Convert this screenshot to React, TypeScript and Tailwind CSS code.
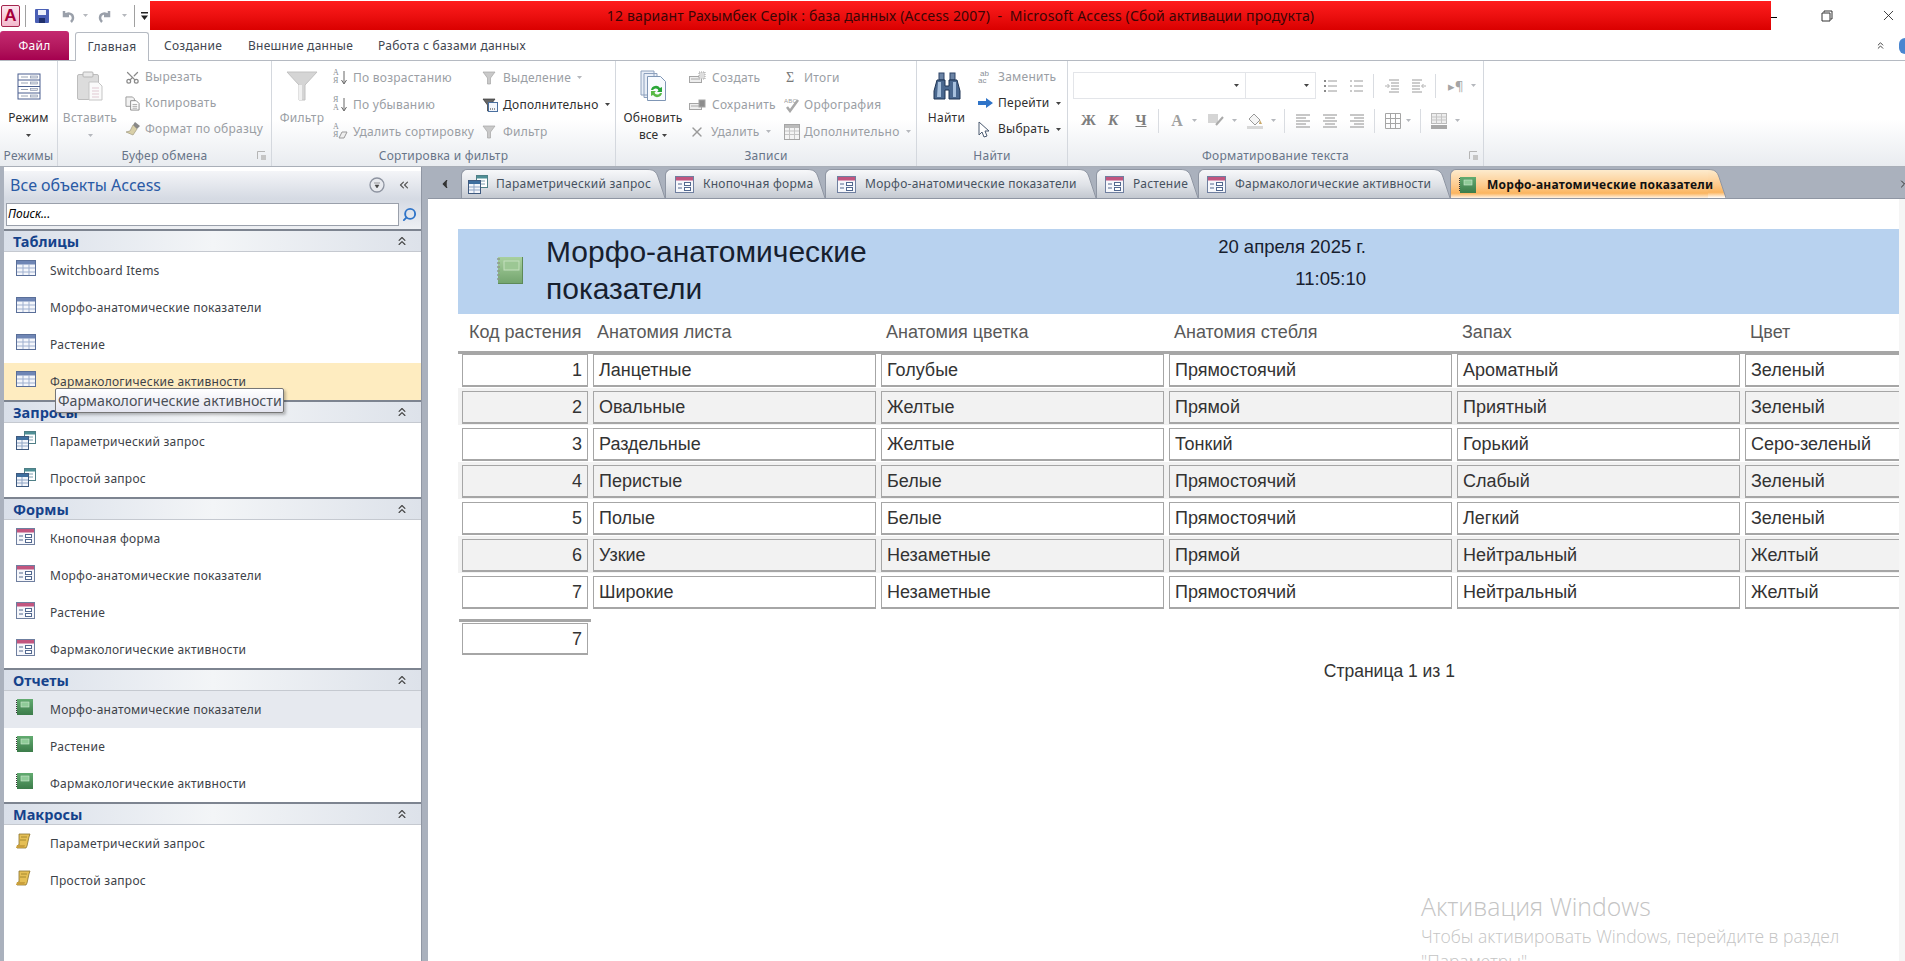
import React from 'react';
import { ChevronsUp, ChevronsLeft, ChevronLeft, ChevronRight, Search, X, Scissors } from 'lucide-react';

type IconProps = { className?: string };

const Caret: React.FC<IconProps & { dark?: boolean }> = ({ className = '', dark }) => (
  <svg viewBox="0 0 5 3" className={`w-[5px] h-[3px] shrink-0 ${className}`}>
    <path d="M0 0h5L2.500 3z" fill={dark ? '#444' : '#b5b8bd'} />
  </svg>
);

const Sep = ({ className = '' }: IconProps) => <div className={`w-px h-[24px] bg-[#d9dce1] shrink-0 ${className}`} />;

const TableIcon = () => (
  <svg viewBox="0 0 20 16" className="w-[20px] h-[16px]">
    <rect x="0.500" y="0.500" width="19" height="15" fill="#f4f6fb" stroke="#5a6f99" />
    <rect x="1" y="1" width="18" height="3.500" fill="#6f86b5" />
    <path d="M1 8h18M1 12h18M7 4v11M13 4v11" stroke="#9fb0cf" />
  </svg>
);

const QueryIcon = () => (
  <svg viewBox="0 0 20 19" className="w-[20px] h-[19px]">
    <rect x="8.500" y="0.500" width="11" height="12" fill="#fff" stroke="#4f7f86" />
    <rect x="9" y="1" width="10" height="2.500" fill="#4f8f96" />
    <path d="M11 6h6M11 9h6" stroke="#7f9fb0" />
    <rect x="0.500" y="5.500" width="12" height="13" fill="#f4f6fb" stroke="#3f5a7f" />
    <rect x="1" y="6" width="11" height="3" fill="#3f6f9f" />
    <path d="M1 12h11M1 15h11M6 9v9" stroke="#8fa5c5" />
  </svg>
);

const FormIcon = () => (
  <svg viewBox="0 0 19 17" className="w-[19px] h-[17px]">
    <rect x="0.500" y="0.500" width="18" height="16" fill="#f6f7fb" stroke="#6f7f9f" />
    <rect x="1" y="1" width="17" height="3.500" fill="#c2557f" />
    <path d="M3 8h4M3 12h4" stroke="#52688f" />
    <rect x="9.500" y="6.500" width="6" height="3" fill="#fff" stroke="#52688f" />
    <rect x="9.500" y="11.500" width="6" height="3" fill="#fff" stroke="#52688f" />
  </svg>
);

const ReportIcon = () => (
  <svg viewBox="0 0 17 16" className="w-[17px] h-[16px]">
    <defs>
      <linearGradient id="rep" x1="0" y1="0" x2="0" y2="1">
        <stop offset="0" stopColor="#62ab70" />
        <stop offset="1" stopColor="#3c7c4a" />
      </linearGradient>
    </defs>
    <rect x="1" y="0" width="16" height="16" fill="url(#rep)" />
    <rect x="5" y="3" width="8" height="5" fill="#8fcb98" stroke="#cfe9d2" strokeWidth="0.600" />
    <path d="M0.500 1v14" stroke="#333" strokeDasharray="1 1" />
  </svg>
);

const BandIcon = () => (
  <svg viewBox="0 0 28 28" className="w-[28px] h-[28px]">
    <defs>
      <linearGradient id="band" x1="0" y1="0" x2="0" y2="1">
        <stop offset="0" stopColor="#a8d09f" />
        <stop offset="1" stopColor="#74a56e" />
      </linearGradient>
    </defs>
    <rect x="3" y="0" width="25" height="27" fill="#5d8a58" />
    <rect x="3" y="0" width="24" height="26" fill="url(#band)" />
    <rect x="9" y="4" width="15" height="9" fill="#9cc794" stroke="#c4e0bd" />
    <path d="M2 2h3M2 6h3M2 10h3M2 14h3M2 18h3M2 22h3" stroke="#8d9a8a" strokeWidth="1.500" />
  </svg>
);

const MacroIcon = () => (
  <svg viewBox="0 0 15 16" className="w-[15px] h-[16px]">
    <path d="M3 1h11l-1 3-2 9-1 2H1l1-3h1z" fill="#e5bf55" stroke="#8a7430" strokeWidth="0.800" />
    <path d="M5 4h6M4 7h6" stroke="#a68a30" />
    <path d="M1 12h8l-1 3H0z" fill="#c99f3c" />
  </svg>
);

const PasteIcon = () => (
  <svg viewBox="0 0 26 30" className="w-[26px] h-[30px]">
    <rect x="0.500" y="3.500" width="21" height="25" rx="1.500" fill="#dcdcdc" stroke="#bdbdbd" />
    <rect x="6" y="1" width="10" height="5" rx="1" fill="#e9e9e9" stroke="#b5b5b5" />
    <path d="M12 11h9l4 4v14H12z" fill="#fafafa" stroke="#c5c5c5" />
    <path d="M15 17h7M15 20h7M15 23h7M15 26h7" stroke="#e0c9d2" />
  </svg>
);

const ModeIcon = () => (
  <svg viewBox="0 0 24 27" className="w-[24px] h-[27px]">
    <rect x="1" y="1" width="22" height="25" fill="#fff" stroke="#4a5f8f" />
    <path d="M1 7h22M1 13.500h22M1 20h22" stroke="#4a5f8f" />
    <path d="M4 4h7M4 10h7M4 16.500h7M4 23h7" stroke="#9aa4b5" />
    <rect x="13.500" y="3" width="7" height="2" fill="#dfe3ea" stroke="#7d8aa5" strokeWidth="0.600" />
    <rect x="13.500" y="9" width="7" height="2" fill="#dfe3ea" stroke="#7d8aa5" strokeWidth="0.600" />
    <rect x="13.500" y="15.500" width="7" height="2" fill="#dfe3ea" stroke="#7d8aa5" strokeWidth="0.600" />
    <rect x="13.500" y="22" width="7" height="2" fill="#dfe3ea" stroke="#7d8aa5" strokeWidth="0.600" />
  </svg>
);

const FunnelIcon = () => (
  <svg viewBox="0 0 32 30" className="w-[32px] h-[30px]">
    <path d="M1 1h30L19 14v15h-6V14z" fill="#d5d5d5" stroke="#c2c2c2" />
    <path d="M13 14v15h3V14z" fill="#f0f0f0" />
  </svg>
);

const RefreshIcon = () => (
  <svg viewBox="0 0 27 32" className="w-[27px] h-[32px]">
    <path d="M1 1h13v24H1zM4 3.500h13v24H4z" fill="#e8eef7" stroke="#8ca0bd" />
    <path d="M7.500 6.500h13l5 5v19h-18z" fill="#f8fbff" stroke="#7f96b5" />
    <path d="M11 20a5 5 0 0 1 9-2l2-1v5h-5l1.500-1.500A3 3 0 0 0 13 20z" fill="#27a538" />
    <path d="M22 23a5 5 0 0 1-9 2l-2 1v-5h5l-1.500 1.500A3 3 0 0 0 20 23z" fill="#58b947" />
  </svg>
);

const BinocularsIcon = () => (
  <svg viewBox="0 0 28 28" className="w-[28px] h-[28px]">
    <rect x="6" y="1" width="5" height="7" fill="#6c84a5" stroke="#2e4568" />
    <rect x="17" y="1" width="5" height="7" fill="#6c84a5" stroke="#2e4568" />
    <path d="M4 8h8v6h4V8h8l3 11v8H16v-9h-4v9H1v-8z" fill="#4a688f" stroke="#1f3554" />
    <path d="M5 10h3v15H4zM20 10h3v15h-3z" fill="#a8c1dd" />
  </svg>
);

const CopyIcon = () => (
  <svg viewBox="0 0 16 16" className="w-[15px] h-[15px]">
    <path d="M1 1h7l2 2v8H1z" fill="#f2f2f2" stroke="#9a9a9a" />
    <path d="M6 5h6l3 3v7H6z" fill="#fff" stroke="#8a8a8a" />
    <path d="M8 9h5M8 11h5M8 13h5" stroke="#a5a5a5" />
  </svg>
);

const BrushIcon = () => (
  <svg viewBox="0 0 16 16" className="w-[16px] h-[16px]">
    <path d="M10 1l5 4-3 3-4-4z" fill="#888" />
    <path d="M8 4l4 4-4 6-7-3 4-1z" fill="#d8cfa8" stroke="#a09a80" strokeWidth="0.700" />
  </svg>
);

const SortIcon: React.FC<{ top: string; bottom: string; erase?: boolean }> = ({ top, bottom, erase }) => (
  <div className="relative w-[15px] h-[18px] shrink-0 text-[#8a8f96] font-['Liberation_Serif',serif] text-[8px] leading-[8px] tracking-normal">
    <div>{top}</div>
    <div>{bottom}</div>
    {erase ? (
      <svg viewBox="0 0 10 8" className="absolute left-[5px] top-[8px] w-[10px] h-[8px]">
        <path d="M4 1h5L6 7H1z" fill="#eee" stroke="#999" />
      </svg>
    ) : (
      <svg viewBox="0 0 6 14" className="absolute left-[8px] top-[2px] w-[6px] h-[14px]">
        <path d="M3 0v12M0.500 9L3 13l2.500-4" stroke="#666" fill="none" />
      </svg>
    )}
  </div>
);

const SmallFunnel: React.FC<{ lit?: boolean }> = ({ lit }) => (
  <svg viewBox="0 0 16 16" className="w-[16px] h-[16px]">
    <path d="M1 2h12L8.500 8v6h-3V8z" fill={lit ? '#666' : '#c9c9c9'} stroke={lit ? '#333' : '#a5a5a5'} strokeWidth="0.700" />
    {lit && <rect x="6.500" y="5.500" width="9" height="9" fill="#f2f6fc" stroke="#4a6f9f" />}
    {lit && <path d="M8 12h1M10 12h1M12 12h1" stroke="#333" />}
  </svg>
);

const RecordIcon: React.FC<{ save?: boolean }> = ({ save }) => (
  <svg viewBox="0 0 17 14" className="w-[17px] h-[14px]">
    <rect x="0.500" y="5.500" width="12" height="6" fill="#eee" stroke="#a5a5a5" />
    <path d="M2 8h8" stroke="#aaa" />
    <rect x="10" y={save ? 2 : 1} width="6" height="7" fill={save ? '#8d8d8d' : '#ddd'} stroke="#a5a5a5" strokeDasharray={save ? undefined : '1 1'} />
  </svg>
);

const SpellIcon = () => (
  <svg viewBox="0 0 16 16" className="w-[16px] h-[16px]">
    <text x="0" y="6" fontSize="6" fill="#9a9a9a" fontFamily="Liberation Sans">ABC</text>
    <path d="M3 10l3 4 8-11" stroke="#a8a8a8" strokeWidth="2.500" fill="none" />
  </svg>
);

const GridIcon = () => (
  <svg viewBox="0 0 16 16" className="w-[16px] h-[16px]">
    <rect x="0.500" y="0.500" width="15" height="15" fill="#f4f4f4" stroke="#a5a5a5" />
    <rect x="1" y="1" width="14" height="3" fill="#bbb" />
    <path d="M1 7h14M1 10.500h14M5.500 4v11M10.500 4v11" stroke="#c5c5c5" />
  </svg>
);

const GotoIcon = () => (
  <svg viewBox="0 0 15 10" className="w-[15px] h-[10px]">
    <path d="M0 3h8V0l7 5-7 5V7H0z" fill="#2f74c8" />
  </svg>
);

const CursorIcon = () => (
  <svg viewBox="0 0 12 17" className="w-[12px] h-[17px]">
    <path d="M1 1v13l3-3 2 5 3-1-2-5h4z" fill="#fff" stroke="#4a5a70" />
  </svg>
);

const ReplaceIcon = () => (
  <div className="w-[15px] h-[15px] shrink-0 text-[8px] leading-[7px] tracking-normal text-[#8a8f96] font-['Liberation_Sans',sans-serif]">
    <div className="pl-[2px]">ab</div>
    <div>ac</div>
  </div>
);

const ListIcon: React.FC<{ numbered?: boolean }> = ({ numbered }) => (
  <svg viewBox="0 0 14 14" className="w-[14px] h-[14px]">
    <path d="M5 2h9M5 7h9M5 12h9" stroke="#9a9a9a" />
    {numbered ? (
      <path d="M1 1h2v2H1zM1 6h2v2H1zM1 11h2v2H1z" fill="#c9c9c9" />
    ) : (
      <path d="M1 1h2v2H1zM1 6h2v2H1zM1 11h2v2H1z" fill="#8a8a8a" />
    )}
  </svg>
);

const IndentIcon: React.FC<{ flip?: boolean }> = ({ flip }) => (
  <svg viewBox="0 0 15 14" className={`w-[15px] h-[14px] ${flip ? '-scale-x-100' : ''}`}>
    <path d="M4 1h10M6 4h8M6 7h8M6 10h8M4 13h10" stroke="#9a9a9a" />
    <path d="M0 7h4M2.500 5L4.500 7l-2 2" stroke="#b0b0b0" fill="none" />
  </svg>
);

const AlignIcon: React.FC<{ mode: 'l' | 'c' | 'r' }> = ({ mode }) => {
  const d = {
    l: 'M0 1h14M0 4h10M0 7h14M0 10h10M0 13h14',
    c: 'M0 1h14M2 4h10M0 7h14M2 10h10M0 13h14',
    r: 'M0 1h14M4 4h10M0 7h14M4 10h10M0 13h14',
  }[mode];
  return (
    <svg viewBox="0 0 14 14" className="w-[14px] h-[14px]">
      <path d={d} stroke="#8f8f8f" />
    </svg>
  );
};

const RibbonGroup: React.FC<{ className: string; label: string; launcher?: boolean; children: React.ReactNode }> = ({
  className,
  label,
  launcher,
  children,
}) => (
  <div className={`relative flex flex-col shrink-0 border-r border-[#d4d8de] ${className}`}>
    <div className="h-[85px] flex">{children}</div>
    <div className="h-[20px] flex items-center justify-center text-[12px] tracking-[0.25px] text-[#687588]">{label}</div>
    {launcher && (
      <svg viewBox="0 0 9 9" className="absolute right-[5px] bottom-[6px] w-[9px] h-[9px]">
        <path d="M0.500 8V0.500H8" stroke="#b5b5b5" fill="none" />
        <path d="M4 4h5v5H4z" fill="#c5c5c5" />
      </svg>
    )}
  </div>
);

const BigButton: React.FC<{
  className: string;
  icon: React.ReactNode;
  label: string;
  dim?: boolean;
  caret?: boolean;
  second?: string;
}> = ({ className, icon, label, dim, caret, second }) => (
  <div className={`flex flex-col items-center pt-[9px] shrink-0 ${className}`}>
    <div className="h-[32px] flex items-center justify-center">{icon}</div>
    <div className={`mt-[7px] leading-[18px] text-[12px] tracking-[0.25px] whitespace-nowrap ${dim ? 'text-[#9a9ea4]' : 'text-[#2f2f2f]'}`}>{label}</div>
    <div className="h-[16px] flex items-center gap-[4px] text-[12px] text-[#2f2f2f]">
      {second}
      {caret && <Caret dark={!dim} />}
    </div>
  </div>
);

const SmallRow: React.FC<{
  icon: React.ReactNode;
  label: string;
  dark?: boolean;
  caret?: boolean;
  className?: string;
  iconBox?: string;
}> = ({ icon, label, dark, caret, className = 'h-[26px]', iconBox = 'w-[20px]' }) => (
  <div className={`flex items-center whitespace-nowrap text-[12px] tracking-[0.25px] ${dark ? 'text-[#2f2f2f]' : 'text-[#9a9ea4]'} ${className}`}>
    <div className={`flex items-center shrink-0 ${iconBox}`}>{icon}</div>
    <span>{label}</span>
    {caret && <Caret dark={dark} className="ml-[6px]" />}
  </div>
);

const Ribbon = () => (
  <div className="h-[106px] flex border-b border-[#a9afb8] bg-gradient-to-b from-white from-55% to-[#e9ecf0]">
    <RibbonGroup className="w-[58px]" label="Режимы">
      <BigButton className="w-[57px]" icon={<ModeIcon />} label="Режим" caret />
    </RibbonGroup>
    <RibbonGroup className="w-[214px]" label="Буфер обмена" launcher>
      <BigButton className="ml-[7px] w-[50px]" icon={<PasteIcon />} label="Вставить" dim caret />
      <div className="ml-[10px] pt-[3px]">
        <SmallRow iconBox="w-[20px]" icon={<Scissors className="w-[15px] h-[15px] text-[#8a8a8a] -rotate-90" />} label="Вырезать" />
        <SmallRow iconBox="w-[20px]" icon={<CopyIcon />} label="Копировать" />
        <SmallRow iconBox="w-[20px]" icon={<BrushIcon />} label="Формат по образцу" />
      </div>
    </RibbonGroup>
    <RibbonGroup className="w-[344px]" label="Сортировка и фильтр">
      <BigButton className="ml-[7px] w-[46px]" icon={<FunnelIcon />} label="Фильтр" dim />
      <div className="ml-[8px] pt-[3px] w-[149px]">
        <SmallRow className="h-[27px]" icon={<SortIcon top="А" bottom="Я" />} label="По возрастанию" />
        <SmallRow className="h-[27px]" icon={<SortIcon top="Я" bottom="А" />} label="По убыванию" />
        <SmallRow className="h-[27px]" icon={<SortIcon top="А" bottom="Я" erase />} label="Удалить сортировку" />
      </div>
      <div className="pt-[3px]">
        <SmallRow className="h-[27px]" iconBox="w-[21px]" icon={<SmallFunnel />} label="Выделение" caret />
        <SmallRow className="h-[27px]" iconBox="w-[21px]" icon={<SmallFunnel lit />} label="Дополнительно" dark caret />
        <SmallRow className="h-[27px]" iconBox="w-[21px]" icon={<SmallFunnel />} label="Фильтр" />
      </div>
    </RibbonGroup>
    <RibbonGroup className="w-[301px]" label="Записи">
      <BigButton className="ml-[7px] w-[60px]" icon={<RefreshIcon />} label="Обновить" second="все" caret />
      <div className="ml-[6px] pt-[3px] w-[95px]">
        <SmallRow className="h-[27px]" iconBox="w-[23px]" icon={<RecordIcon />} label="Создать" />
        <SmallRow className="h-[27px]" iconBox="w-[23px]" icon={<RecordIcon save />} label="Сохранить" />
        <SmallRow className="h-[27px]" iconBox="w-[22px]" icon={<X className="w-[16px] h-[16px] text-[#9a9a9a]" />} label="Удалить" caret />
      </div>
      <div className="pt-[3px]">
        <SmallRow className="h-[27px]" iconBox="w-[20px]" icon={<span className="pl-[2px] text-[14px] text-[#777] font-['Liberation_Serif',serif]">Σ</span>} label="Итоги" />
        <SmallRow className="h-[27px]" iconBox="w-[20px]" icon={<SpellIcon />} label="Орфография" />
        <SmallRow className="h-[27px]" iconBox="w-[20px]" icon={<GridIcon />} label="Дополнительно" caret />
      </div>
    </RibbonGroup>
    <RibbonGroup className="w-[151px]" label="Найти">
      <BigButton className="ml-[5px] w-[49px]" icon={<BinocularsIcon />} label="Найти" />
      <div className="ml-[7px] pt-[3px]">
        <SmallRow iconBox="w-[20px]" icon={<ReplaceIcon />} label="Заменить" />
        <SmallRow iconBox="w-[20px]" icon={<GotoIcon />} label="Перейти" dark caret />
        <SmallRow iconBox="w-[20px]" icon={<CursorIcon />} label="Выбрать" dark caret />
      </div>
    </RibbonGroup>
    <RibbonGroup className="w-[416px]" label="Форматирование текста" launcher>
      <div className="pt-[11px]">
        <div className="h-[27px] flex items-center">
          <div className="ml-[5px] w-[173px] h-[27px] border border-[#e3e5e9] flex items-center justify-end pr-[6px]">
            <Caret dark />
          </div>
          <div className="w-[70px] h-[27px] border border-[#e3e5e9] border-l-0 flex items-center justify-end pr-[6px]">
            <Caret dark />
          </div>
          <div className="ml-[7px]"><ListIcon /></div>
          <div className="ml-[12px]"><ListIcon numbered /></div>
          <Sep className="ml-[10px]" />
          <div className="ml-[11px]"><IndentIcon /></div>
          <div className="ml-[11px]"><IndentIcon flip /></div>
          <Sep className="ml-[9px]" />
          <span className="ml-[12px] w-[14px] text-[13px] leading-[14px] text-[#a5a5a5]">▸¶</span>
          <Caret className="ml-[9px]" />
        </div>
        <div className="mt-[8px] h-[27px] flex items-center font-['Liberation_Serif',serif] text-[15px] font-bold text-[#7d7d7d]">
          <span className="ml-[13px] w-[14px] text-center">Ж</span>
          <span className="ml-[11px] w-[14px] text-center italic">К</span>
          <span className="ml-[14px] w-[14px] text-center underline">Ч</span>
          <Sep className="ml-[10px]" />
          <span className="ml-[11px] w-[14px] text-center text-[16px] text-[#a0a0a0]">А</span>
          <Caret className="ml-[8px]" />
          <svg viewBox="0 0 16 14" className="ml-[11px] w-[16px] h-[14px]">
            <rect x="0" y="0" width="10" height="9" fill="#d5d5d5" />
            <path d="M8 11l7-8" stroke="#aaa" strokeWidth="2" />
          </svg>
          <Caret className="ml-[8px]" />
          <svg viewBox="0 0 16 16" className="ml-[10px] w-[16px] h-[16px]">
            <path d="M7 1l6 6-5 5-6-6z" fill="#f5f5f5" stroke="#999" />
            <path d="M13 7l2 4h-3z" fill="#c9a868" />
            <rect x="0" y="13" width="16" height="3" fill="#d8d8d8" />
          </svg>
          <Caret className="ml-[8px]" />
          <Sep className="ml-[8px]" />
          <div className="ml-[11px]"><AlignIcon mode="l" /></div>
          <div className="ml-[13px]"><AlignIcon mode="c" /></div>
          <div className="ml-[13px]"><AlignIcon mode="r" /></div>
          <Sep className="ml-[10px]" />
          <svg viewBox="0 0 16 16" className="ml-[10px] w-[16px] h-[16px]">
            <path d="M0.500 0.500h15v15h-15zM5.500 0.500v15M10.500 0.500v15M0.500 5.500h15M0.500 10.500h15" stroke="#a5a5a5" fill="none" />
          </svg>
          <Caret className="ml-[5px]" />
          <Sep className="ml-[9px]" />
          <svg viewBox="0 0 16 16" className="ml-[10px] w-[16px] h-[16px]">
            <rect x="0.500" y="0.500" width="15" height="10" fill="#eee" stroke="#bbb" />
            <path d="M0.500 4h15M0.500 7h15M5.500 0.500v10M10.500 0.500v10" stroke="#c5c5c5" />
            <rect x="0" y="12" width="16" height="4" fill="#a8a8a8" />
          </svg>
          <Caret className="ml-[8px]" />
        </div>
      </div>
    </RibbonGroup>
  </div>
);

const sections = [
  { title: 'Таблицы', kind: 'table', items: ['Switchboard Items', 'Морфо-анатомические показатели', 'Растение', 'Фармакологические активности'] },
  { title: 'Запросы', kind: 'query', items: ['Параметрический запрос', 'Простой запрос'] },
  { title: 'Формы', kind: 'form', items: ['Кнопочная форма', 'Морфо-анатомические показатели', 'Растение', 'Фармакологические активности'] },
  { title: 'Отчеты', kind: 'report', items: ['Морфо-анатомические показатели', 'Растение', 'Фармакологические активности'] },
  { title: 'Макросы', kind: 'macro', items: ['Параметрический запрос', 'Простой запрос'] },
];

const NavIcon: React.FC<{ kind: string }> = ({ kind }) => {
  if (kind === 'table') return <TableIcon />;
  if (kind === 'query') return <QueryIcon />;
  if (kind === 'form') return <FormIcon />;
  if (kind === 'report') return <ReportIcon />;
  return <MacroIcon />;
};

const NavPane = () => (
  <div className="relative w-[428px] shrink-0 flex h-full bg-[#aab1bd]">
    <div className="w-[4px] shrink-0" />
    <div className="w-[418px] shrink-0 flex flex-col bg-white border-r border-[#8f96a3]">
      <div className="h-[28px] mt-[4px] flex items-center pl-[6px] pr-[10px] bg-gradient-to-b from-[#f4f5f8] to-[#d5dae3]">
        <span className="text-[16px] text-[#2a5aa5]">Все объекты Access</span>
        <svg viewBox="0 0 16 16" className="ml-auto w-[16px] h-[16px]">
          <circle cx="8" cy="8" r="7" fill="#e7e9ee" stroke="#8d93a0" strokeWidth="1.300" />
          <path d="M5 6h6M6 8h4l-2 3z" fill="#444" stroke="#444" strokeWidth="0.500" />
        </svg>
        <ChevronsLeft className="ml-[12px] w-[14px] h-[14px] text-[#555]" />
      </div>
      <div className="h-[30px] flex items-center pl-[2px] bg-gradient-to-b from-[#d5dae3] to-[#eef0f4]">
        <div className="w-[393px] h-[23px] bg-white border border-[#9aa0ab] pl-[1px] flex items-center text-[12px] italic text-black">Поиск...</div>
        <Search className="ml-[3px] w-[15px] h-[15px] text-[#2f74c8] -scale-x-100" strokeWidth={3} />
      </div>
      {sections.map((section) => (
        <div key={section.title}>
          <div className="h-[23px] flex items-center justify-between pl-[9px] pr-[12px] border-t-2 border-[#7d8490] bg-gradient-to-r from-[#d9dfe9] via-[#f3f5f7] to-[#dde2ea] border-b border-b-[#c5c9d0]">
            <span className="text-[14.500px] font-bold text-[#15428b] leading-none">{section.title}</span>
            <ChevronsUp className="w-[14px] h-[14px] text-[#444]" />
          </div>
          {section.items.map((item, i) => {
            const hot = section.kind === 'table' && i === 3;
            const soft = section.kind === 'report' && i === 0;
            return (
              <div
                key={item}
                className={`h-[37px] flex pl-[12px] ${hot ? 'bg-[#feecc0]' : soft ? 'bg-[#e6e9ef]' : ''}`}
              >
                <div className="w-[34px] pt-[8px] shrink-0"><NavIcon kind={section.kind} /></div>
                <span className="leading-[37px] text-[12px] tracking-[0.25px] text-[#3d4248]">{item}</span>
              </div>
            );
          })}
        </div>
      ))}
    </div>
    <div className="absolute left-[55px] top-[221px] w-[229px] h-[25px] flex items-center pl-[2px] text-[14.200px] text-[#4a4f57] border border-[#767676] rounded-[2px] bg-gradient-to-b from-white to-[#e4e5f0] shadow-[2px_2px_3px_rgba(0,0,0,0.25)] whitespace-nowrap">
      Фармакологические активности
    </div>
  </div>
);

const tabs = [
  { label: 'Параметрический запрос', kind: 'query', width: 'w-[204px]', pad: 'pl-[6px]' },
  { label: 'Кнопочная форма', kind: 'form', width: 'w-[160px]', pad: 'pl-[9px]' },
  { label: 'Морфо-анатомические показатели', kind: 'form', width: 'w-[271px]', pad: 'pl-[11px]' },
  { label: 'Растение', kind: 'form', width: 'w-[102px]', pad: 'pl-[8px]' },
  { label: 'Фармакологические активности', kind: 'form', width: 'w-[252px]', pad: 'pl-[8px]' },
];

// the slanted right edge of a document tab
const TabTail: React.FC<{ active?: boolean }> = ({ active }) => {
  const id = active ? 'tailActive' : 'tailIdle';
  return (
    <svg viewBox="0 0 18 29" className="w-[18px] h-[29px] shrink-0">
      <defs>
        <linearGradient id={id} x1="0" y1="0" x2="0" y2="1">
          {active ? (
            <>
              <stop offset="0" stopColor="#fdebcd" />
              <stop offset="0.550" stopColor="#fdc98a" />
              <stop offset="0.800" stopColor="#fbb560" />
              <stop offset="1" stopColor="#ffffff" />
            </>
          ) : (
            <>
              <stop offset="0" stopColor="#f7f8fa" />
              <stop offset="0.550" stopColor="#dfe2e7" />
              <stop offset="1" stopColor="#c3c8d0" />
            </>
          )}
        </linearGradient>
      </defs>
      <path d="M0 0.500C6 0.500 9 2 11 8L18 29H0z" fill={`url(#${id})`} />
      <path d="M0 0.500C6 0.500 9 2 11 8L18 29" fill="none" stroke="#8f96a3" />
    </svg>
  );
};

const TabStrip = () => (
  <div className="relative h-[32px] flex items-end bg-[#aab1bd] border-b border-[#8f96a3] overflow-hidden">
    <ChevronLeft className="ml-[10px] mb-[7px] w-[14px] h-[14px] text-[#333] fill-[#333]" />
    <div className="w-[9px] shrink-0" />
    {tabs.map((tab) => (
      <div key={tab.label} className={`${tab.width} h-[29px] shrink-0 flex`}>
        <div
          className={`${tab.pad} relative z-10 flex-1 min-w-0 flex items-center rounded-tl-[6px] border-l border-t border-[#8f96a3] bg-[linear-gradient(#f7f8fa,#dfe2e7_55%,#c3c8d0)] text-[12px] tracking-[0.25px] text-[#475260] whitespace-nowrap`}
        >
          <div className="w-[28px] shrink-0"><NavIcon kind={tab.kind} /></div>
          {tab.label}
        </div>
        <TabTail />
      </div>
    ))}
    <div className="w-[276px] h-[30px] -mb-px shrink-0 flex">
      <div className="relative z-10 pl-[8px] flex-1 min-w-0 flex items-center rounded-tl-[6px] border-l border-t border-[#8f96a3] bg-[linear-gradient(#fdebcd,#fdc98a_55%,#fbb560_80%,#ffffff)] text-[12px] tracking-[0.25px] font-bold text-[#111] whitespace-nowrap">
        <div className="w-[28px] shrink-0"><ReportIcon /></div>
        Морфо-анатомические показатели
      </div>
      <TabTail active />
    </div>
    <ChevronRight className="absolute right-[-4px] bottom-[8px] w-[12px] h-[12px] text-[#333]" />
  </div>
);

const rows = [
  ['1', 'Ланцетные', 'Голубые', 'Прямостоячий', 'Ароматный', 'Зеленый'],
  ['2', 'Овальные', 'Желтые', 'Прямой', 'Приятный', 'Зеленый'],
  ['3', 'Раздельные', 'Желтые', 'Тонкий', 'Горький', 'Серо-зеленый'],
  ['4', 'Перистые', 'Белые', 'Прямостоячий', 'Слабый', 'Зеленый'],
  ['5', 'Полые', 'Белые', 'Прямостоячий', 'Легкий', 'Зеленый'],
  ['6', 'Узкие', 'Незаметные', 'Прямой', 'Нейтральный', 'Желтый'],
  ['7', 'Широкие', 'Незаметные', 'Прямостоячий', 'Нейтральный', 'Желтый'],
];

const columns = 'grid grid-cols-[126px_283px_283px_283px_283px_200px] gap-x-[5px] pl-[4px]';

const Report = () => (
  <div className="flex-1 min-w-0 h-full pl-[30px] pt-[30px] bg-white font-['Liberation_Sans',Arial,sans-serif] overflow-hidden">
    <div className="h-[85px] flex bg-[#b8d2ef] text-[#17202e]">
      <div className="ml-[37px] pt-[28px] w-[51px] shrink-0"><BandIcon /></div>
      <div className="w-[600px] shrink-0 pt-[4px] text-[30px] leading-[37px]">
        Морфо-анатомические
        <br />
        показатели
      </div>
      <div className="w-[220px] shrink-0 pt-[2px] text-right text-[18.500px] leading-[32px]">
        <div>20 апреля 2025 г.</div>
        <div>11:05:10</div>
      </div>
    </div>
    <div className={`h-[40px] border-b-[3px] border-[#a6a6a6] items-center text-[18px] text-[#595959] whitespace-nowrap ${columns}`}>
      <div className="pl-[7px]">Код растения</div>
      <div className="pl-[4px]">Анатомия листа</div>
      <div className="pl-[5px]">Анатомия цветка</div>
      <div className="pl-[5px]">Анатомия стебля</div>
      <div className="pl-[5px]">Запах</div>
      <div className="pl-[5px]">Цвет</div>
    </div>
    {rows.map((row, i) => (
      <div
        key={row[0]}
        className={`${i === 0 ? 'h-[34px]' : 'h-[37px] pt-[3px]'} ${i % 2 === 1 ? 'bg-[#f2f2f2]' : ''} ${columns} overflow-hidden text-[18px] text-[#333]`}
      >
        {row.map((cell, c) => (
          <div
            key={c}
            className={`h-[33px] border border-b-2 border-[#a6a6a6] leading-[30px] whitespace-nowrap overflow-hidden ${c === 0 ? 'text-right pr-[5px]' : 'pl-[5px]'}`}
          >
            {cell}
          </div>
        ))}
      </div>
    ))}
    <div className="mt-[9px] ml-[1px] w-[132px] h-[3px] bg-[#a6a6a6]" />
    <div className="mt-[1px] ml-[4px] w-[126px] h-[32px] border border-b-2 border-[#a6a6a6] text-right pr-[5px] leading-[30px] text-[18px] text-[#333]">7</div>
    <div className="mt-[6px] w-[997px] text-right text-[17.500px] leading-[20px] text-[#333]">Страница 1 из 1</div>
  </div>
);

const App = () => (
  <div className="relative w-[1905px] h-[961px] overflow-hidden bg-white font-['Noto_Sans',sans-serif]">
    <div className="h-[31px] flex items-center">
      <div className="ml-[1px] w-[19px] h-[22px] border border-[#a4264f] rounded-[2px] bg-gradient-to-b from-[#fbe6ee] to-[#f3b9cd] flex items-center justify-center font-['Liberation_Sans',sans-serif] text-[17px] font-bold text-[#a5003c]">A</div>
      <div className="ml-[5px] w-px h-[22px] bg-[#a0a0a0]" />
      <svg viewBox="0 0 14 14" className="ml-[9px] w-[14px] h-[14px]">
        <rect width="14" height="14" rx="1" fill="#4a5fb5" />
        <rect x="3" y="1" width="8" height="5" fill="#eef2fb" />
        <rect x="4" y="9" width="6" height="5" fill="#1e2f6b" />
      </svg>
      <svg viewBox="0 0 14 14" className="ml-[12px] w-[14px] h-[14px]">
        <path d="M3 2v5h5M3 7c3-4 9-3 9 2 0 2-1 3-2 4" stroke="#9aa0aa" strokeWidth="2.500" fill="none" />
      </svg>
      <Caret className="ml-[8px]" />
      <svg viewBox="0 0 14 14" className="ml-[10px] w-[14px] h-[14px] -scale-x-100">
        <path d="M3 2v5h5M3 7c3-4 9-3 9 2 0 2-1 3-2 4" stroke="#9aa0aa" strokeWidth="2.500" fill="none" />
      </svg>
      <Caret className="ml-[10px]" />
      <div className="ml-[7px] w-px h-[22px] bg-[#a0a0a0]" />
      <svg viewBox="0 0 7 8" className="ml-[6px] w-[7px] h-[8px]">
        <path d="M0 0h7v1.500H0zM0 3.500h7L3.500 8z" fill="#222" />
      </svg>
      <div className="ml-[2px] w-[1621px] h-[29px] flex items-center justify-center bg-gradient-to-b from-[#ff1c1c] to-[#da0000] text-[14px] tracking-[0.16px] text-[#3a0505] whitespace-pre">
        12 вариант Рахымбек Серік : база данных (Access 2007)  -  Microsoft Access (Сбой активации продукта)
      </div>
      <div className="mt-[3px] w-[6px] h-px bg-black" />
      <svg viewBox="0 0 12 12" className="ml-[44px] w-[12px] h-[12px]">
        <path d="M3 2.500V1h8v8H9.500M1 3h8v8H1z" stroke="#333" fill="none" />
      </svg>
      <X className="ml-[47px] w-[17px] h-[17px] text-[#222]" strokeWidth={1.200} />
    </div>
    <div className="h-[29px] flex items-end text-[12px] tracking-[0.25px] text-[#3f4650]">
      <div className="w-[69px] h-[29px] rounded-t-[3px] bg-gradient-to-b from-[#c42a70] to-[#a5004f] flex items-center justify-center text-white">Файл</div>
      <div className="ml-[6px] w-[74px] h-[29px] -mb-px relative rounded-t-[3px] border border-b-0 border-[#b5bac2] bg-white flex items-center justify-center">Главная</div>
      <span className="ml-[15px] leading-[29px]">Создание</span>
      <span className="ml-[26px] leading-[29px]">Внешние данные</span>
      <span className="ml-[25px] leading-[29px]">Работа с базами данных</span>
      <div className="ml-auto h-[29px] flex items-center">
        <ChevronsUp className="w-[11px] h-[11px] text-[#333] mr-[13px]" />
        <div className="w-[6px] h-[16px] rounded-l-full bg-[#4a86d0]" />
      </div>
    </div>
    <div className="border-t border-[#b5bac2]">
      <Ribbon />
    </div>
    <div className="flex h-[794px]">
      <NavPane />
      <div className="flex-1 min-w-0 flex flex-col">
        <TabStrip />
        <div className="flex-1 min-h-0 flex">
          <Report />
          <div className="w-[6px] shrink-0 bg-[#f5f5f5]" />
        </div>
      </div>
    </div>
    <div className="absolute left-[1421px] top-[889px] font-['Open_Sans',sans-serif] font-light text-[#c4c4c4] whitespace-nowrap">
      <div className="text-[24.800px] leading-[34px]">Активация Windows</div>
      <div className="text-[17.500px] leading-[26px]">Чтобы активировать Windows, перейдите в раздел</div>
      <div className="text-[17.500px] leading-[24px]">"Параметры".</div>
    </div>
  </div>
);

export default App;
